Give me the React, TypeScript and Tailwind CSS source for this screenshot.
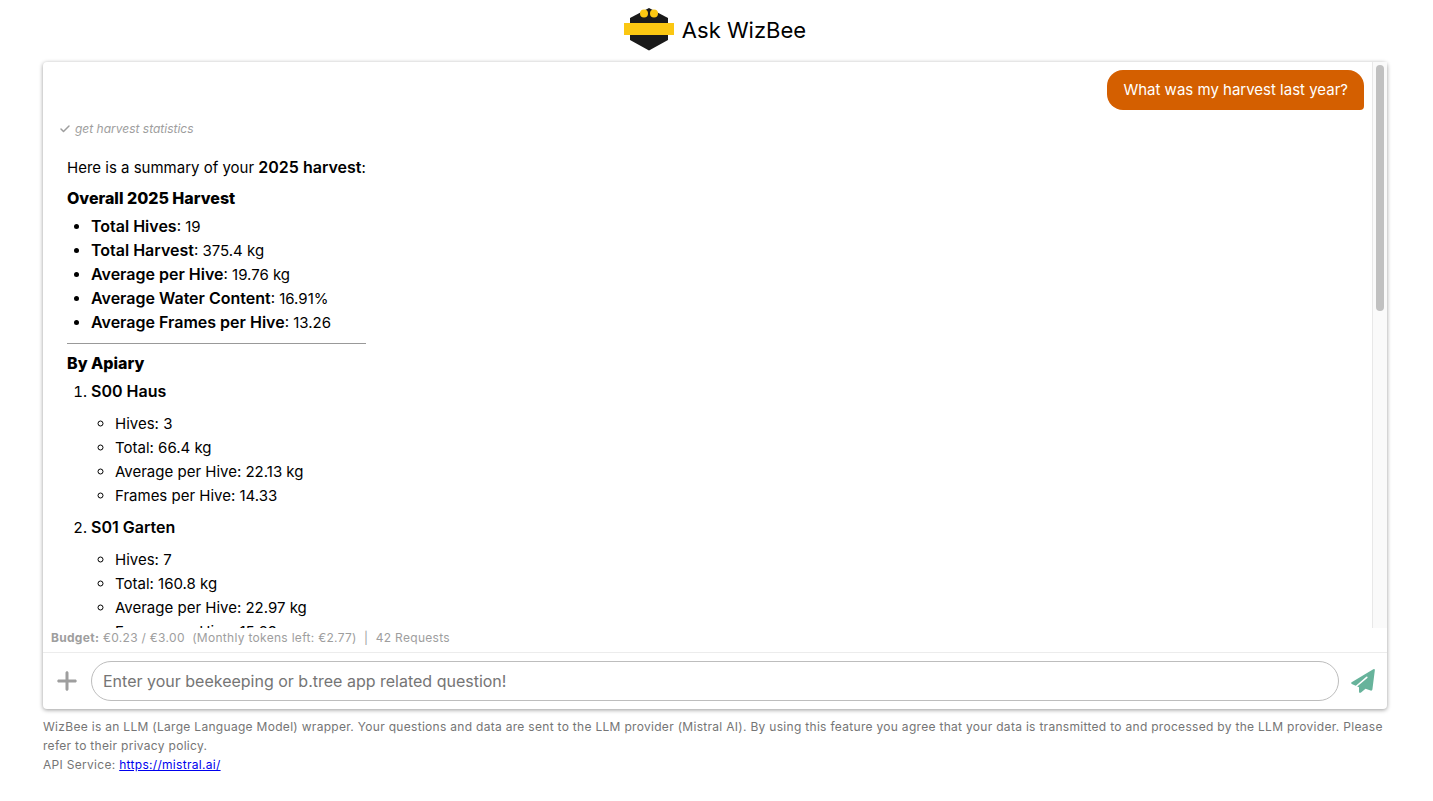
import { Check } from "lucide-react";
import { FaPlus } from "react-icons/fa6";

const summary = [
  { label: "Total Hives", value: "19" },
  { label: "Total Harvest", value: "375.4 kg" },
  { label: "Average per Hive", value: "19.76 kg" },
  { label: "Average Water Content", value: "16.91%" },
  { label: "Average Frames per Hive", value: "13.26" },
];

const apiaries = [
  { name: "S00 Haus", hives: "3", total: "66.4 kg", average: "22.13 kg", frames: "14.33" },
  { name: "S01 Garten", hives: "7", total: "160.8 kg", average: "22.97 kg", frames: "15.29" },
];

function Logo() {
  return (
    <svg viewBox="0 0 50 44" className="w-[50px] h-11" aria-hidden="true">
      <path d="M25 0L44 10V32L25 42.500L6 32V10Z" fill="#1a1a1a" />
      <rect x="0" y="15" width="50" height="12" fill="#fbc712" />
      <circle cx="20" cy="5.500" r="4" fill="#fbc712" />
      <circle cx="30" cy="5.500" r="4" fill="#fbc712" />
    </svg>
  );
}

function SendIcon() {
  return (
    <svg viewBox="0 0 24 26" className="w-6 h-[26px]" aria-hidden="true">
      <path
        d="M.6 14.200L22.300 1.300Q24 .5 23.800 2.400L21.400 21.600Q21 23 19.600 22.600L14.500 20.700L10 24.600Q8 25.500 8 23.500V19.300L.8 16Q-.3 15 .6 14.200Z"
        fill="currentColor"
      />
      <path d="M4.500 19L15.800 9.300" stroke="#fff" strokeWidth="1.600" strokeLinecap="round" />
    </svg>
  );
}

function Answer() {
  return (
    <div className="w-fit px-4 py-2 text-[15px] leading-6 text-black">
      <p>
        Here is a summary of your <strong className="text-base leading-5 font-semibold">2025 harvest</strong>:
      </p>
      <h3 className="mt-[6px] mb-[5px] text-base font-extrabold">Overall 2025 Harvest</h3>
      <ul className="list-disc pl-6">
        {summary.map((s) => (
          <li key={s.label}>
            <strong className="text-base leading-5 font-semibold">{s.label}</strong>: {s.value}
          </li>
        ))}
      </ul>
      <hr className="mt-2 mb-[7px] border-[#999]" />
      <h3 className="mb-[5px] text-base font-extrabold">By Apiary</h3>
      <ol className="list-decimal pl-6">
        {apiaries.map((a) => (
          <li key={a.name}>
            <strong className="text-base leading-5 font-semibold">{a.name}</strong>
            <ul className="list-[circle] pl-6 my-2">
              <li>Hives: {a.hives}</li>
              <li>Total: {a.total}</li>
              <li>Average per Hive: {a.average}</li>
              <li>Frames per Hive: {a.frames}</li>
            </ul>
          </li>
        ))}
      </ol>
    </div>
  );
}

export default function App() {
  return (
    <div className="flex flex-col h-screen pl-[43px] pr-[46px] bg-white font-['Inter',sans-serif] text-base">
      <header className="flex items-center justify-center gap-2 h-[62px] pb-[2px] shrink-0">
        <Logo />
        <h1 className="text-[22px] leading-8 text-black">Ask WizBee</h1>
      </header>

      <main className="flex flex-col flex-1 min-h-0 rounded bg-white shadow-[0_1px_4px_rgba(0,0,0,0.4)]">
        <div className="flex flex-1 min-h-0">
          <div className="flex-1 overflow-hidden p-2">
            <div className="flex justify-end">
              <p className="px-4 py-2 rounded-2xl rounded-br bg-[#d45f00] text-[15px] leading-6 text-white">
                What was my harvest last year?
              </p>
            </div>
            <div className="flex items-center gap-1 my-2 px-2 h-[22px] text-xs italic text-[#9e9e9e]">
              <Check className="w-3 h-3" strokeWidth={3} />
              get harvest statistics
            </div>
            <Answer />
          </div>
          <div className="w-[15px] shrink-0 px-[3px] pt-[3px] border-l border-[#e8e8e8] bg-[#fafafa]">
            <div className="w-2 h-[246px] rounded-full bg-[#c1c1c1]" />
          </div>
        </div>

        <p className="h-6 px-2 text-xs leading-5 text-[#9e9e9e] whitespace-pre tracking-wide">
          <strong className="font-bold">Budget:</strong> €0.23 / €3.00{"  "}(Monthly tokens left: €2.77){"  "}|{"  "}42 Requests
        </p>

        <form className="flex items-center gap-3 px-3 py-2 border-t border-[#ececec]" onSubmit={(e) => e.preventDefault()}>
          <button type="button" aria-label="Add" className="text-[#9e9e9e]">
            <FaPlus className="w-6 h-6" />
          </button>
          <input
            type="text"
            aria-label="Question"
            placeholder="Enter your beekeeping or b.tree app related question!"
            className="flex-1 h-10 px-[11px] rounded-full border border-[#bdbdbd] text-base placeholder:text-[#757575] outline-none"
          />
          <button type="submit" aria-label="Send" className="text-[#67b39b]">
            <SendIcon />
          </button>
        </form>
      </main>

      <footer className="pt-2 pb-[27px] text-xs leading-[19px] tracking-wide text-[#757575]">
        <p>
          WizBee is an LLM (Large Language Model) wrapper. Your questions and data are sent to the LLM provider (Mistral AI). By using this feature you agree that your data is transmitted to and processed by the LLM provider. Please refer to their privacy policy.
        </p>
        <p>
          API Service: <a href="https://mistral.ai/" className="underline text-[#0000ee]">https://mistral.ai/</a>
        </p>
      </footer>
    </div>
  );
}
